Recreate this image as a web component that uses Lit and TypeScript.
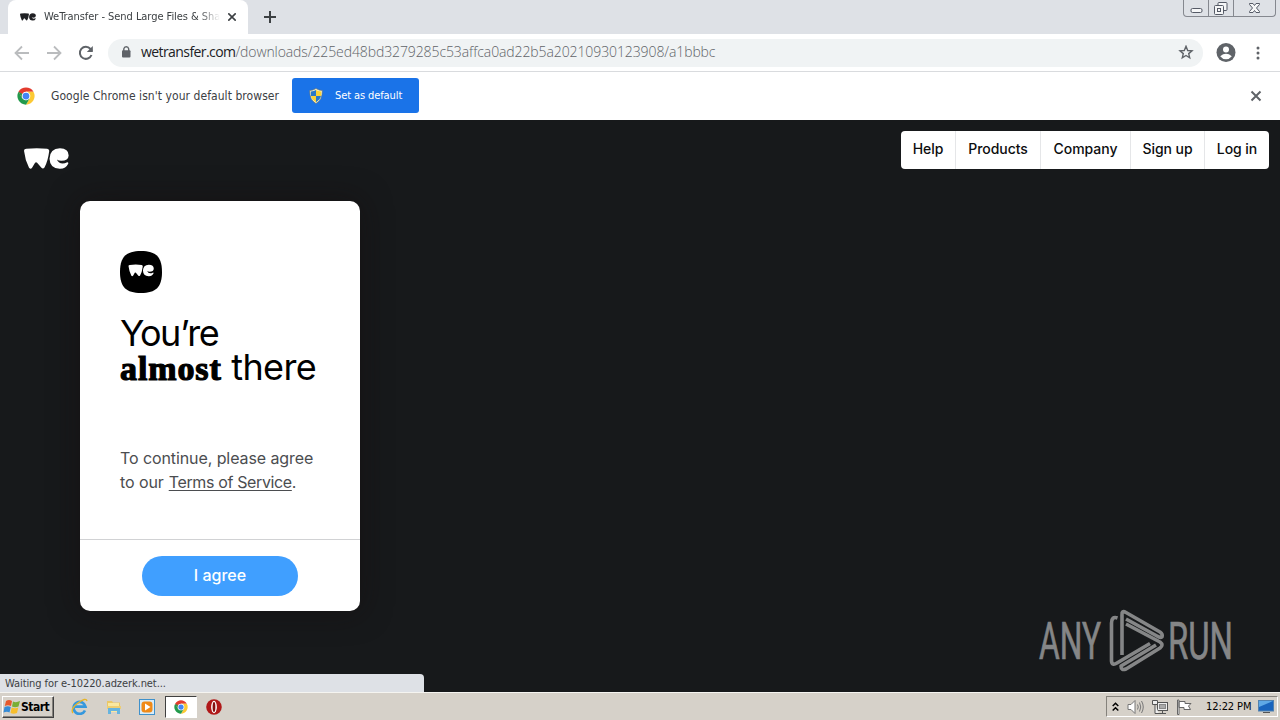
import { LitElement, html, svg, css } from "lit";
import { customElement, property } from "lit/decorators.js";

const weMark = svg`
  <path d="M0 8Q0 2 7 2Q38-1 69 2Q76 3 75 10Q71 41 61 58Q57 63 52 59L39 44Q36 41 33 44L24 59Q20 64 15 59Q3 35 0 8Z"/>
  <path d="M132 46Q124 63 106 62Q77 61 76 32Q77 2 107 1Q133 2 133 22Q132 38 111 38Q103 38 98 34Q103 46 115 46Q122 46 127 43Q132 41 132 46Z"/>`;

const chromeMark = svg`
  <circle cx="24" cy="24" r="23" fill="#fff"/>
  <path d="M24 24L4.1 12.5A23 23 0 0 1 43.9 12.5L24 12.5Z" fill="#e33b2e"/>
  <path d="M24 12.5H43.9A23 23 0 0 1 24 47L34 29.8Z" fill="#fcc934"/>
  <path d="M4.1 12.5L14 29.8L24 35.5L34 29.8L24 47A23 23 0 0 1 4.1 12.5Z" fill="#229a4c"/>
  <path d="M4.1 12.5L14 29.8L24 12.5Z" fill="#e33b2e"/>
  <path d="M4.1 12.5L14 29.8L20 34L24 24Z" fill="#229a4c"/>
  <circle cx="24" cy="24" r="11.5" fill="#fff"/>
  <circle cx="24" cy="24" r="9" fill="#4285f4"/>`;

@customElement("browser-chrome")
class BrowserChrome extends LitElement {
  static styles = css`
    :host { display: block; font-family: "DejaVu Sans Condensed", "DejaVu Sans", sans-serif; font-stretch: condensed; color: #3c4043; }
    svg { display: block; flex: none; }
    .strip { height: 34px; background: #dee1e6; display: flex; padding-left: 8px; }
    .tab { width: 240px; height: 34px; background: #fff; border-radius: 8px 8px 0 0; display: flex; align-items: center; padding-left: 12px; box-sizing: border-box; }
    .title { width: 176px; margin-left: 8px; overflow: hidden; white-space: nowrap; font-size: 11px; letter-spacing: -0.05px; line-height: 16px; -webkit-mask-image: linear-gradient(90deg, #000 88%, transparent); }
    .close { margin-left: 8px; }
    .plus { margin: 11px 0 0 16px; }
    .win { margin: 0 4px 0 auto; width: 91px; height: 16px; border: 1px solid #85888f; border-top: 0; border-radius: 0 0 4px 4px; display: flex; }
    .win span { border-right: 1px solid #85888f; display: flex; justify-content: center; width: 24px; }
    .win span:last-child { border: 0; width: 41px; }
    .bar { height: 37px; background: #fff; border-bottom: 1px solid #d9dbde; display: flex; align-items: center; padding-left: 14px; }
    .bar > svg + svg { margin-left: 16px; }
    .omni { margin-left: 14px; width: 1095px; height: 28px; box-sizing: border-box; border-radius: 14px; background: #f0f3f4; display: flex; align-items: center; padding: 0 9px 0 10px; }
    .url { margin: -2px 0 0 7px; flex: 1; font-family: "Open Sans", "Noto Sans", sans-serif; font-stretch: normal; font-weight: 300; font-size: 14px; line-height: 20px; letter-spacing: -.1px; color: #5f6368; white-space: nowrap; }
    .host { color: #202124; font-weight: 400; letter-spacing: -.58px; }
    .bar > svg.user { margin-left: 13px; }
    .bar > svg.dots { margin-left: 10px; }
    .info { height: 48px; box-sizing: border-box; padding-bottom: 1px; background: #fff; display: flex; align-items: center; padding-left: 17px; }
    .msg { margin-left: 16px; width: 241px; font-size: 12px; letter-spacing: .06px; white-space: nowrap; }
    .set { width: 127px; height: 35px; border-radius: 3px; background: #1a73e8; color: #fff; font-size: 11px; letter-spacing: -.1px; display: flex; align-items: center; box-sizing: border-box; padding-left: 17px; white-space: nowrap; }
    .set svg { margin-right: 12px; }
    .x2 { margin: 1px 18px 0 auto; }
  `;
  render() {
    return html`
      <div class="strip">
        <div class="tab">
          <svg width="16" height="8" viewBox="0 0 134 64" fill="#202124">${weMark}</svg>
          <div class="title">WeTransfer - Send Large Files &amp; Sha</div>
          <svg class="close" width="8" height="8" viewBox="0 0 8 8" stroke="#3c4043" stroke-width="1.6"><path d="M.3.3L7.7 7.7M7.7.3L.3 7.7"/></svg>
        </div>
        <svg class="plus" width="12" height="12" viewBox="0 0 12 12" stroke="#3c4043" stroke-width="2"><path d="M6 0V12M0 6H12"/></svg>
        <div class="win">
          <span><svg width="23" height="16" viewBox="0 0 23 16" fill="#f5f6f7" stroke="#555a66"><rect x="6" y="8.5" width="11" height="4" rx="1.5"/></svg></span>
          <span><svg width="24" height="16" viewBox="0 0 24 16" fill="#f5f6f7" stroke="#555a66"><rect x="9" y="2.5" width="9" height="8" rx="1"/><rect x="5.500" y="5.500" width="9" height="9" rx="1"/><rect x="8.500" y="8.500" width="3" height="3"/></svg></span>
          <span><svg width="41" height="16" viewBox="0 0 41 16" fill="#f5f6f7" stroke="#555a66"><path d="M15.500 3.500H19L20.500 5.500L22 3.500H25.500V4.500L22.500 8L25.500 11.500V12.500H22L20.500 10.500L19 12.500H15.500V11.500L18.500 8L15.500 4.500Z"/></svg></span>
        </div>
      </div>
      <div class="bar">
        <svg width="16" height="16" viewBox="0 0 16 16" fill="none" stroke="#babcbe" stroke-width="1.8"><path d="M15 8H2M8 1.500L1.500 8L8 14.500"/></svg>
        <svg width="16" height="16" viewBox="0 0 16 16" fill="none" stroke="#babcbe" stroke-width="1.8"><path d="M1 8H14M8 1.500L14.500 8L8 14.500"/></svg>
        <svg width="16" height="16" viewBox="0 0 16 16" fill="none" stroke="#5f6368" stroke-width="2"><path d="M13.500 10A6 6 0 1 1 12.500 4L14 5.800"/><path d="M14.800 1V7H8.800Z" fill="#5f6368" stroke="none"/></svg>
        <div class="omni">
          <svg width="16" height="16" viewBox="0 0 16 16"><rect x="4" y="5.300" width="8.500" height="7.300" rx="1" fill="#5f6368"/><path d="M5.800 6V3.800A2.500 2.500 0 0 1 10.700 3.800V6" fill="none" stroke="#5f6368" stroke-width="1.400"/></svg>
          <div class="url"><span class="host">wetransfer.com</span>/downloads/225ed48bd3279285c53affca0ad22b5a20210930123908/a1bbbc</div>
          <svg width="16" height="16" viewBox="0 0 16 16" fill="none" stroke="#5f6368" stroke-width="1.400"><path d="M8 1.300L9.700 5.500L14 5.800L10.700 8.600L11.700 12.800L8 10.500L4.300 12.800L5.300 8.600L2 5.800L6.300 5.500Z"/></svg>
        </div>
        <svg class="user" width="20" height="20" viewBox="0 0 20 20"><circle cx="10" cy="9.500" r="9.500" fill="#5f6368"/><circle cx="10" cy="6.500" r="3" fill="#fff"/><path d="M4.200 13.200Q7 10.800 10 10.800T15.800 13.200Q13.500 16.200 10 16.200T4.200 13.200Z" fill="#fff"/></svg>
        <svg class="dots" width="24" height="16" viewBox="0 0 24 16" fill="#5f6368"><circle cx="12" cy="3" r="1.500"/><circle cx="12" cy="8" r="1.500"/><circle cx="12" cy="13" r="1.500"/></svg>
      </div>
      <div class="info">
        <svg width="18" height="18" viewBox="0 0 48 48">${chromeMark}</svg>
        <div class="msg">Google Chrome isn't your default browser</div>
        <div class="set">
          <svg width="14" height="16" viewBox="0 0 14 16"><path d="M7 .5Q10 2.500 13.300 2.500Q13.500 12 7 15.500Q.5 12 .7 2.500Q4 2.500 7 .5Z" fill="#fff8c8" stroke="#66747b" stroke-width=".7"/><path d="M7 2V8H2Q1.700 5 1.900 3.500Q5 3.300 7 2Z" fill="#2878c8"/><path d="M7 2V8H12Q12.300 5 12.100 3.500Q9 3.300 7 2ZM7 8V14.200Q2.800 11.700 2 8Z" fill="#f9d237"/><path d="M7 8V14.200Q11.200 11.700 12 8Z" fill="#2878c8"/></svg>Set as default
        </div>
        <svg class="x2" width="12" height="12" viewBox="0 0 12 12" stroke="#5f6368" stroke-width="2"><path d="M1.500 1.500L10.500 10.500M10.500 1.500L1.500 10.500"/></svg>
      </div>`;
  }
}

@customElement("transfer-page")
class TransferPage extends LitElement {
  @property({ attribute: false }) links = ["Help", "Products", "Company", "Sign up", "Log in"];
  static styles = css`
    :host { display: block; position: relative; height: 572px; background: #17191b; font-family: Inter, sans-serif; overflow: hidden; }
    svg { display: block; }
    .head { height: 81px; display: flex; justify-content: space-between; padding: 11px 11px 0 24px; box-sizing: border-box; }
    .logo { margin-top: 17px; }
    .nav { height: 38px; display: flex; background: #fff; border-radius: 4px; }
    .nav a { box-sizing: border-box; border-right: 1px solid #e5e6e8; text-align: center; font: 500 14px/36px Inter, sans-serif; letter-spacing: -.05px; color: #0c0d0e; white-space: nowrap; width: 55px; }
    .nav a:nth-child(2) { width: 85px; }
    .nav a:nth-child(3) { width: 90px; }
    .nav a:nth-child(4) { width: 74px; }
    .nav a:nth-child(5) { width: 64px; border: 0; }
    .card { margin-left: 80px; width: 280px; height: 410px; border-radius: 10px; background: #fff; box-shadow: 0 0 30px rgba(20, 12, 12, .5); display: flex; flex-direction: column; }
    .body { height: 339px; box-sizing: border-box; padding: 50px 0 0 40px; border-bottom: 1px solid #d1d2d4; }
    h1 { margin: 23px 0 0; font-weight: 400; font-size: 36px; line-height: 34px; letter-spacing: -0.6px; color: #000; white-space: nowrap; }
    .first { letter-spacing: -1.6px; }
    .em { font-family: "Liberation Serif", serif; font-weight: 700; font-size: 34px; letter-spacing: .9px; -webkit-text-stroke: 1.2px #000; }
    p { margin: 60px 0 0; font-size: 16px; line-height: 24px; letter-spacing: -.09px; color: #4b4d50; white-space: nowrap; }
    .tos { margin-left: .6px; letter-spacing: -.36px; text-decoration: underline; text-underline-offset: 2px; text-decoration-thickness: 1px; }
    .agree { margin: 16px auto 0; width: 156px; height: 40px; border-radius: 20px; background: #409fff; color: #fff; font-size: 16px; line-height: 39px; text-align: center; font-weight: 500; }
    .mark { position: absolute; left: 1034px; top: 486px; overflow: visible; }
    .status { position: absolute; left: 0; bottom: 0; width: 424px; height: 18px; box-sizing: border-box; padding-left: 5px; background: #dee1e6; border-radius: 0 4px 0 0; color: #3c4043; font: 11px/19px "DejaVu Sans Condensed", sans-serif; letter-spacing: -.08px; }
  `;
  render() {
    return html`
      <div class="head">
        <svg class="logo" width="45" height="21.500" viewBox="0 0 134 64" fill="#fff">${weMark}</svg>
        <nav class="nav">${this.links.map((l) => html`<a>${l}</a>`)}</nav>
      </div>
      <div class="card">
        <div class="body">
          <svg width="42" height="42" viewBox="0 0 42 42"><path d="M21 0C36 0 42 6 42 21S36 42 21 42S0 36 0 21S6 0 21 0Z"/><g transform="translate(8.500 13.500) scale(.19)" fill="#fff">${weMark}</g></svg>
          <h1><span class="first">You’re</span><br><span class="em">almost</span> there</h1>
          <p>To continue, please agree<br>to our <span class="tos">Terms of Service</span>.</p>
        </div>
        <div class="agree">I agree</div>
      </div>
      <svg class="mark" width="212" height="80" viewBox="0 0 212 80" fill="#858687">
        <g font-family="Roboto" font-size="51" stroke="#858687" stroke-width=".7">
          <text x="5" y="53" textLength="62" lengthAdjust="spacingAndGlyphs">ANY</text>
          <text x="134" y="53" textLength="65" lengthAdjust="spacingAndGlyphs">RUN</text>
        </g>
        <g fill="none" stroke="#858687" stroke-width="3.600" stroke-linecap="butt" stroke-linejoin="round">
          <path d="M88 49V9Q87.500 4 92 6.500L126 26Q129 28 128 31Q126 32 123 30L92 13"/>
          <path d="M83.500 12Q77.500 10 77.500 17V55Q78 60 83 57L116 37.500"/>
          <path d="M92 18L126 36Q130 39 126 42L92 63Q87 65 87 60L122 39"/>
        </g>
      </svg>
      <div class="status">Waiting for e-10220.adzerk.net...</div>`;
  }
}

@customElement("task-bar")
class TaskBar extends LitElement {
  static styles = css`
    :host { display: flex; height: 28px; box-sizing: border-box; border-top: 1px solid #f5f4f0; background: #d6d1c9; align-items: center; font: 11px "DejaVu Sans Condensed", sans-serif; color: #000; }
    svg { display: block; flex: none; }
    .start { margin-left: 2px; width: 52px; height: 22px; box-sizing: border-box; border: 1px solid; border-color: #fff #404040 #404040 #fff; box-shadow: inset -1px -1px #85827c; display: flex; align-items: center; font-weight: 700; font-size: 12px; letter-spacing: -.5px; }
    .quick { display: flex; align-items: center; margin-left: 17px; gap: 17.5px; }
    .active { width: 32px; height: 22px; box-sizing: border-box; border: 1px solid; border-color: #404040 #fff #fff #404040; background: #fff; display: flex; align-items: center; justify-content: center; margin: 0 -8px; }
    .tray { margin: 0 2px 0 auto; width: 172px; height: 21px; box-sizing: border-box; border: 1px solid; border-color: #85827c #fff #fff #85827c; display: flex; align-items: center; padding-left: 5px; }
    .tray svg + svg { margin-left: 8px; }
    .time { margin-left: 14px; width: 52px; letter-spacing: -.1px; white-space: nowrap; }
  `;
  render() {
    return html`
      <div class="start">
        <svg width="18" height="18" viewBox="0 0 18 18"><path d="M3 3Q6 1 9 3L8 8Q5 6.500 1.800 8Z" fill="#e5582c"/><path d="M10 3.500Q13 5 17 3L15.500 8.500Q12 10 9 8.500Z" fill="#79ae34"/><path d="M1.500 9Q5 7.500 7.800 9L6.500 14.500Q4 13 .5 14.500Z" fill="#358bd6"/><path d="M8.700 9.500Q12 11 15.300 9.500L14 15Q10.500 16.500 7.500 15Z" fill="#f7be2c"/></svg>Start
      </div>
      <div class="quick">
        <svg width="17" height="17" viewBox="0 0 17 17" fill="none"><path d="M14 12.500A6 6 0 1 1 14.500 8.700H3" stroke="#3598dd" stroke-width="2.700"/><path d="M2 15Q-1 11 7 5T16 3" stroke="#e6b529" stroke-width="1.400"/></svg>
        <svg width="16" height="16" viewBox="0 0 16 16"><path d="M1 2H6L7 3.500H14V8H1Z" fill="#eac766"/><path d="M2 4H13V13H2Z" fill="#f9e8a0"/><path d="M1 7H15V10H1Z" fill="#edce73"/><path d="M2 9H14V15H11V12H5V15H2Z" fill="#66b4df"/></svg>
        <svg width="16" height="16" viewBox="0 0 16 16"><rect x=".5" y=".5" width="15" height="15" fill="#d9ecf8" stroke="#3f91cb"/><rect x="2.500" y="2.500" width="11" height="11" rx="3" fill="#f08a18"/><path d="M6 4.500L11.500 8L6 11.500Z" fill="#fff"/></svg>
        <div class="active"><svg width="14" height="14" viewBox="0 0 48 48">${chromeMark}</svg></div>
        <svg width="16" height="16" viewBox="0 0 15 15"><circle cx="7.500" cy="7.500" r="7.300" fill="#b01818"/><ellipse cx="7.500" cy="7.500" rx="2.700" ry="5.800" fill="#fff"/><ellipse cx="7.500" cy="7.500" rx="1.300" ry="4.800" fill="#851010"/></svg>
      </div>
      <div class="tray">
        <svg width="7" height="10" viewBox="0 0 7 10" fill="none" stroke="#000" stroke-width="1.500"><path d="M.7 4L3.500 1.200L6.300 4M.7 8.500L3.500 5.700L6.300 8.500"/></svg>
        <svg width="17" height="16" viewBox="0 0 17 16" fill="none" stroke="#777"><path d="M1 5.500H4L8 1.500V14.500L4 10.500H1Z" fill="#fff"/><path d="M10.500 5.500Q12 8 10.500 10.500M12.500 3.500Q15 8 12.500 12.500M14.500 2Q18 8 14.500 14"/></svg>
        <svg width="16" height="16" viewBox="0 0 16 16" fill="#eee" stroke="#555"><rect x="5.500" y="3.500" width="10" height="8"/><rect x="7.500" y="5.500" width="6" height="4" fill="#aaa" stroke="#888"/><path d="M7 14.500H14M10.500 12V14"/><path d="M.5 1.500H5.500V5.500H.5ZM3 5.500V14.500H7"/></svg>
        <svg width="16" height="16" viewBox="0 0 16 16" fill="#fff" stroke="#666"><path d="M1.500 1V15.500H3V1ZM3 2.500H9V4.500H15L12.500 7L14.500 10.500H8V8.500H3Z"/></svg>
        <div class="time">12:22 PM</div>
        <svg width="16" height="14" viewBox="0 0 16 14"><rect x=".5" y=".5" width="15" height="10.500" fill="#1964bd" stroke="#5281ae"/><path d="M1 1H15L1 7Z" fill="#5ea8e6"/><path d="M5 12.500H12" stroke="#555"/></svg>
      </div>`;
  }
}

@customElement("app-root")
class AppRoot extends LitElement {
  static styles = css`
    :host { display: block; width: 1280px; height: 720px; overflow: hidden; }
  `;
  render() {
    return html`<browser-chrome></browser-chrome><transfer-page></transfer-page><task-bar></task-bar>`;
  }
}
